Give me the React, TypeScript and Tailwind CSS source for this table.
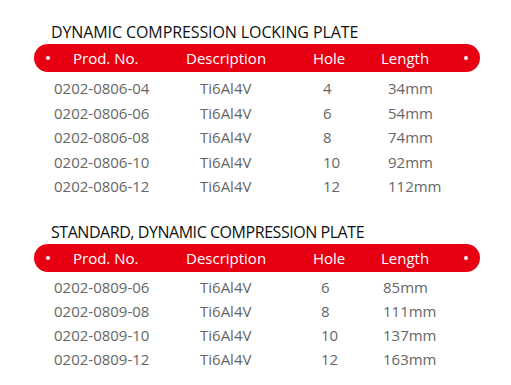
import React from 'react'

const section1 = [
  ['0202-0806-04', 'Ti6Al4V', '4', '34mm'],
  ['0202-0806-06', 'Ti6Al4V', '6', '54mm'],
  ['0202-0806-08', 'Ti6Al4V', '8', '74mm'],
  ['0202-0806-10', 'Ti6Al4V', '10', '92mm'],
  ['0202-0806-12', 'Ti6Al4V', '12', '112mm'],
]

const section2 = [
  ['0202-0809-06', 'Ti6Al4V', '6', '85mm'],
  ['0202-0809-08', 'Ti6Al4V', '8', '111mm'],
  ['0202-0809-10', 'Ti6Al4V', '10', '137mm'],
  ['0202-0809-12', 'Ti6Al4V', '12', '163mm'],
]

function HeaderBar() {
  return (
    <div className="flex items-center h-[28px] w-[446px] rounded-full bg-[#e60012] text-white text-[15px]">
      <span className="ml-[12px] w-[4px] h-[4px] rounded-full bg-white" />
      <span className="ml-[23px] w-[113px]">Prod. No.</span>
      <span className="w-[127px]">Description</span>
      <span className="w-[68px]">Hole</span>
      <span className="w-[83px]">Length</span>
      <span className="w-[4px] h-[4px] rounded-full bg-white" />
    </div>
  )
}

function Rows({ rows, holeX, lenX, rowH }: { rows: string[][]; holeX: string; lenX: string; rowH: string }) {
  return (
    <div className="text-[15px] text-[#666]">
      {rows.map((r) => (
        <div key={r[0]} className={`flex items-center ${rowH}`}>
          <span className="ml-[20px] w-[146px]">{r[0]}</span>
          <span className={holeX}>{r[1]}</span>
          <span className={lenX}>{r[2]}</span>
          <span>{r[3]}</span>
        </div>
      ))}
    </div>
  )
}

export default function App() {
  return (
    <div
      className="w-[511px] h-[385px] bg-white pl-[34px] pt-[22px]"
      style={{ fontFamily: '"Open Sans", "Noto Sans", sans-serif' }}
    >
      <h2 className="ml-[17px] h-[20px] leading-[20px] text-[16px] text-[#111] tracking-[-0.1px]">
        DYNAMIC COMPRESSION LOCKING PLATE
      </h2>
      <div className="mt-[2px]">
        <HeaderBar />
      </div>
      <div className="mt-[4px]">
        <Rows rows={section1} holeX="w-[123px]" lenX="w-[65px]" rowH="h-[24.5px]" />
      </div>

      <h2 className="mt-[23.5px] ml-[17px] h-[20px] leading-[20px] text-[16px] text-[#111] tracking-[-0.45px]">
        STANDARD, DYNAMIC COMPRESSION PLATE
      </h2>
      <div className="mt-[2px]">
        <HeaderBar />
      </div>
      <div className="mt-[3px]">
        <Rows rows={section2} holeX="w-[121px]" lenX="w-[62px]" rowH="h-[24px]" />
      </div>
    </div>
  )
}
